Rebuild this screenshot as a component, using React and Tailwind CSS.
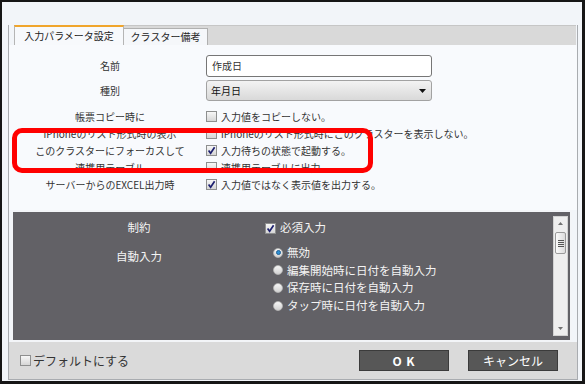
import React from 'react';

const CheckBox = ({ checked }) => (
  <span className="w-[11px] h-[11px] shrink-0 border border-[#8e8f8f] bg-linear-to-b from-[#f7f7f7] to-[#d6d6d6] flex items-center justify-center">
    {checked && (
      <svg width="9" height="9" viewBox="0 0 9 9">
        <path d="M1.6 4.6 L3.6 7.3 L7.6 1.2" fill="none" stroke="#1d2070" strokeWidth="1.7" />
      </svg>
    )}
  </span>
);

const Radio = ({ on }) => (
  <span className="w-[10px] h-[10px] shrink-0 rounded-full border border-[#b4b4b4] bg-linear-to-b from-[#f6f6f6] to-[#d2d2d2] flex items-center justify-center">
    {on && <span className="w-[5px] h-[5px] rounded-full bg-[#2c8fd3] border border-[#1d5f96]" />}
  </span>
);

const CheckRow = ({ label, text, checked }) => (
  <div className="h-[17px] flex items-center">
    <div className="w-[192px] text-center leading-none">{label}</div>
    <div className="flex items-center gap-[4px] leading-none">
      <CheckBox checked={checked} />
      <span>{text}</span>
    </div>
  </div>
);

export default function App() {
  return (
    <div className="relative w-[585px] h-[384px] border-l-2 border-t-2 border-r-[3px] border-b-[3px] border-[#161616] bg-[#f2f5f9] pl-[6px] pt-[23px] pr-[4px] pb-[1px] font-['Noto_Sans_CJK_JP',sans-serif] text-[#333333]">
      <div className="h-full flex flex-col border-x border-b border-[#a9acb0]">
        {/* tabs */}
        <div className="h-[20px] shrink-0 ml-[5px] mr-[1px] bg-[#d9d9d9] border-t border-[#c6c6c6] flex items-end">
          <div className="h-[20px] w-[110px] -mt-px bg-[#f7f9fc] border-t-2 border-x border-t-[#f0a52c] border-x-[#b5b5b5] flex items-center justify-center text-[10px] leading-none text-[#222]">
            入力パラメータ設定
          </div>
          <div className="h-[17px] w-[84px] bg-[#f5f7fa] border-t border-r border-[#b0b0b0] flex items-center justify-center text-[10px] leading-none text-[#222]">
            クラスター備考
          </div>
        </div>

        {/* form */}
        <div className="h-[165px] shrink-0 bg-[#f8fafd] pl-[5px] pt-[10px] text-[10px]">
          <div className="h-[22px] flex items-center">
            <div className="w-[192px] text-center leading-none">名前</div>
            <div className="w-[226px] h-[22px] bg-white border border-[#767676] rounded-[3px] flex items-center pl-[5px] leading-none">作成日</div>
          </div>
          <div className="h-[21px] mt-[3px] flex items-center">
            <div className="w-[192px] text-center leading-none">種別</div>
            <div className="w-[226px] h-[21px] border border-[#a2a2a2] rounded-[3px] bg-linear-to-b from-[#f3f3f3] to-[#d9d9d9] flex items-center justify-between pl-[4px] pr-[5px] leading-none text-[#111]">
              <span>年月日</span>
              <svg width="7" height="4" viewBox="0 0 7 4">
                <path d="M0 0 L7 0 L3.5 4 Z" fill="#111" />
              </svg>
            </div>
          </div>
          <div className="mt-[7px]">
            <CheckRow label="帳票コピー時に" text="入力値をコピーしない。" />
            <CheckRow label="iPhoneのリスト形式時の表示" text="iPhoneのリスト形式時にこのクラスターを表示しない。" />
            <CheckRow label="このクラスターにフォーカスして" text="入力待ちの状態で起動する。" checked />
            <CheckRow label="連携用テーブル" text="連携用テーブルに出力" />
            <CheckRow label="サーバーからのEXCEL出力時" text="入力値ではなく表示値を出力する。" checked />
          </div>
        </div>

        {/* constraint panel */}
        <div className="h-[132px] shrink-0 ml-[2px] mr-[5px] border-2 border-[#f3f5f8] bg-[#626166] flex text-[11.5px] text-[#f4f4f4]">
          <div className="flex-1 pt-[8px]">
            <div className="h-[16px] flex items-center">
              <div className="w-[252px] text-center leading-none">制約</div>
              <div className="flex items-center gap-[4px] leading-none">
                <CheckBox checked />
                <span>必須入力</span>
              </div>
            </div>
            <div className="flex mt-[8px]">
              <div className="w-[252px] text-center leading-none pt-[7px]">自動入力</div>
              <div className="pl-[8px]">
                {[
                  ['無効', true],
                  ['編集開始時に日付を自動入力', false],
                  ['保存時に日付を自動入力', false],
                  ['タップ時に日付を自動入力', false],
                ].map(([t, on]) => (
                  <div key={t} className="h-[17.6px] flex items-center gap-[4px] leading-none">
                    <Radio on={on} />
                    <span>{t}</span>
                  </div>
                ))}
              </div>
            </div>
          </div>
          <div className="w-[15px] my-[4px] mr-[2px] bg-[#eeeeee] border border-[#d2d2d2] flex flex-col items-center">
            <svg className="mt-[5px]" width="5" height="3" viewBox="0 0 5 3">
              <path d="M0 3 L5 3 L2.5 0 Z" fill="#707070" />
            </svg>
            <div className="mt-[7px] w-[11px] h-[22px] border border-[#9a9a9a] rounded-[2px] bg-linear-to-r from-[#fbfbfb] to-[#dcdcdc] flex flex-col items-center justify-center gap-[1px]">
              <span className="w-[6px] h-px bg-[#555]" />
              <span className="w-[6px] h-px bg-[#555]" />
              <span className="w-[6px] h-px bg-[#555]" />
              <span className="w-[6px] h-px bg-[#555]" />
            </div>
            <svg className="mt-auto mb-[5px]" width="5" height="3" viewBox="0 0 5 3">
              <path d="M0 0 L5 0 L2.5 3 Z" fill="#707070" />
            </svg>
          </div>
        </div>

        {/* footer */}
        <div className="flex-1 bg-[#dadada] flex items-center pl-[11px] pr-[19px]">
          <div className="flex items-center gap-[2px] text-[12px] leading-none text-[#333]">
            <CheckBox />
            <span>デフォルトにする</span>
          </div>
          <div className="ml-auto flex gap-[19px]">
            <button className="w-[90px] h-[21px] bg-[#575757] border border-[#3b3b3b] text-white text-[12px] font-bold leading-none tracking-[1px] flex items-center justify-center">
              O K
            </button>
            <button className="w-[90px] h-[21px] bg-[#575757] border border-[#3b3b3b] text-white text-[12px] leading-none flex items-center justify-center">
              キャンセル
            </button>
          </div>
        </div>
      </div>

      {/* red annotation */}
      <div className="absolute left-[10px] top-[126px] w-[361px] h-[45px] border-[5px] border-[#ff0000] rounded-[10px] pointer-events-none" />
    </div>
  );
}
